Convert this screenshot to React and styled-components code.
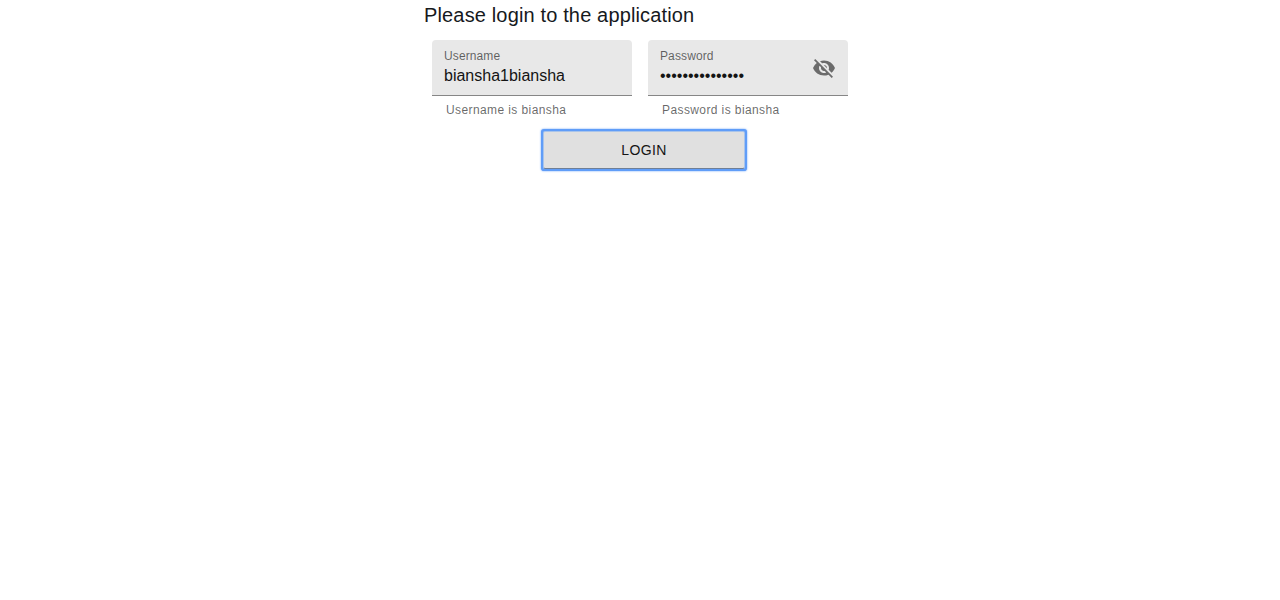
import React, { useState } from "react";
import styled, { createGlobalStyle } from "styled-components";
import { MdVisibility, MdVisibilityOff } from "react-icons/md";

const GlobalStyle = createGlobalStyle`
  *, *::before, *::after { box-sizing: border-box; }
  body {
    margin: 0;
    background: #fff;
    color: #212529;
    font-family: Helvetica, "Liberation Sans", Arial, sans-serif;
  }
`;

const Page = styled.main`
  display: flex;
  justify-content: center;
  align-items: flex-start;
  min-height: 100vh;
`;

const LoginForm = styled.form`
  display: flex;
  flex-direction: column;
`;

const Title = styled.h1`
  margin: 0 0 2px;
  color: #16191d;
  font-size: 20px;
  font-weight: 400;
  line-height: 30px;
  letter-spacing: 0.0075em;
`;

const Fields = styled.div`
  display: flex;
  flex-wrap: wrap;
  gap: 16px;
  padding: 8px;
`;

const FieldGroup = styled.div`
  width: 200px;
`;

const FilledBox = styled.div`
  display: flex;
  align-items: center;
  height: 56px;
  padding: 0 12px;
  background: #e8e8e8;
  border-bottom: 1px solid #868686;
  border-radius: 4px 4px 0 0;
`;

const FieldText = styled.div`
  display: flex;
  flex: 1;
  flex-direction: column;
  min-width: 0;
`;

const Label = styled.label`
  color: rgba(0, 0, 0, 0.6);
  font-size: 12px;
  line-height: 16px;
  letter-spacing: 0.00938em;
`;

const Input = styled.input`
  width: 100%;
  height: 24px;
  padding: 0;
  border: 0;
  outline: 0;
  background: none;
  color: #141414;
  font: inherit;
  font-size: 16px;
`;

const Helper = styled.p`
  margin: 4px 14px 0;
  color: rgba(0, 0, 0, 0.6);
  font-size: 12px;
  line-height: 20px;
  letter-spacing: 0.03333em;
`;

const IconButton = styled.button`
  display: flex;
  padding: 0;
  border: 0;
  background: none;
  color: #6b6b6b;
  cursor: pointer;
`;

const LoginButton = styled.button`
  align-self: center;
  width: 200px;
  height: 36px;
  margin-left: 8px;
  margin-top: 4px;
  padding: 0 16px;
  border: 0;
  border-radius: 1px;
  background: #e0e0e0;
  color: #141414;
  font-family: inherit;
  font-size: 14px;
  letter-spacing: 0.02857em;
  text-transform: uppercase;
  cursor: pointer;
  box-shadow:
    0 1px 0 #6f7f96,
    0 0 0 1px #a9c4ea,
    0 0 0 3px #609df8,
    0 0 2px 3px #609df8;
`;

function Field({ id, label, helper, adornment, ...input }) {
  return (
    <FieldGroup>
      <FilledBox>
        <FieldText>
          <Label htmlFor={id}>{label}</Label>
          <Input id={id} aria-describedby={`${id}-helper`} {...input} />
        </FieldText>
        {adornment}
      </FilledBox>
      <Helper id={`${id}-helper`}>{helper}</Helper>
    </FieldGroup>
  );
}

export default function App() {
  const [username, setUsername] = useState("biansha1biansha");
  const [password, setPassword] = useState("biansha1biansha");
  const [visible, setVisible] = useState(false);

  return (
    <Page>
      <GlobalStyle />
      <LoginForm onSubmit={(e) => e.preventDefault()}>
        <Title>Please login to the application</Title>
        <Fields>
          <Field
            id="username"
            label="Username"
            helper="Username is biansha"
            value={username}
            onChange={(e) => setUsername(e.target.value)}
          />
          <Field
            id="password"
            label="Password"
            helper="Password is biansha"
            type={visible ? "text" : "password"}
            value={password}
            onChange={(e) => setPassword(e.target.value)}
            adornment={
              <IconButton
                type="button"
                aria-label="Toggle password visibility"
                onClick={() => setVisible(!visible)}
              >
                {visible ? <MdVisibility size={24} /> : <MdVisibilityOff size={24} />}
              </IconButton>
            }
          />
        </Fields>
        <LoginButton type="submit">Login</LoginButton>
      </LoginForm>
    </Page>
  );
}
